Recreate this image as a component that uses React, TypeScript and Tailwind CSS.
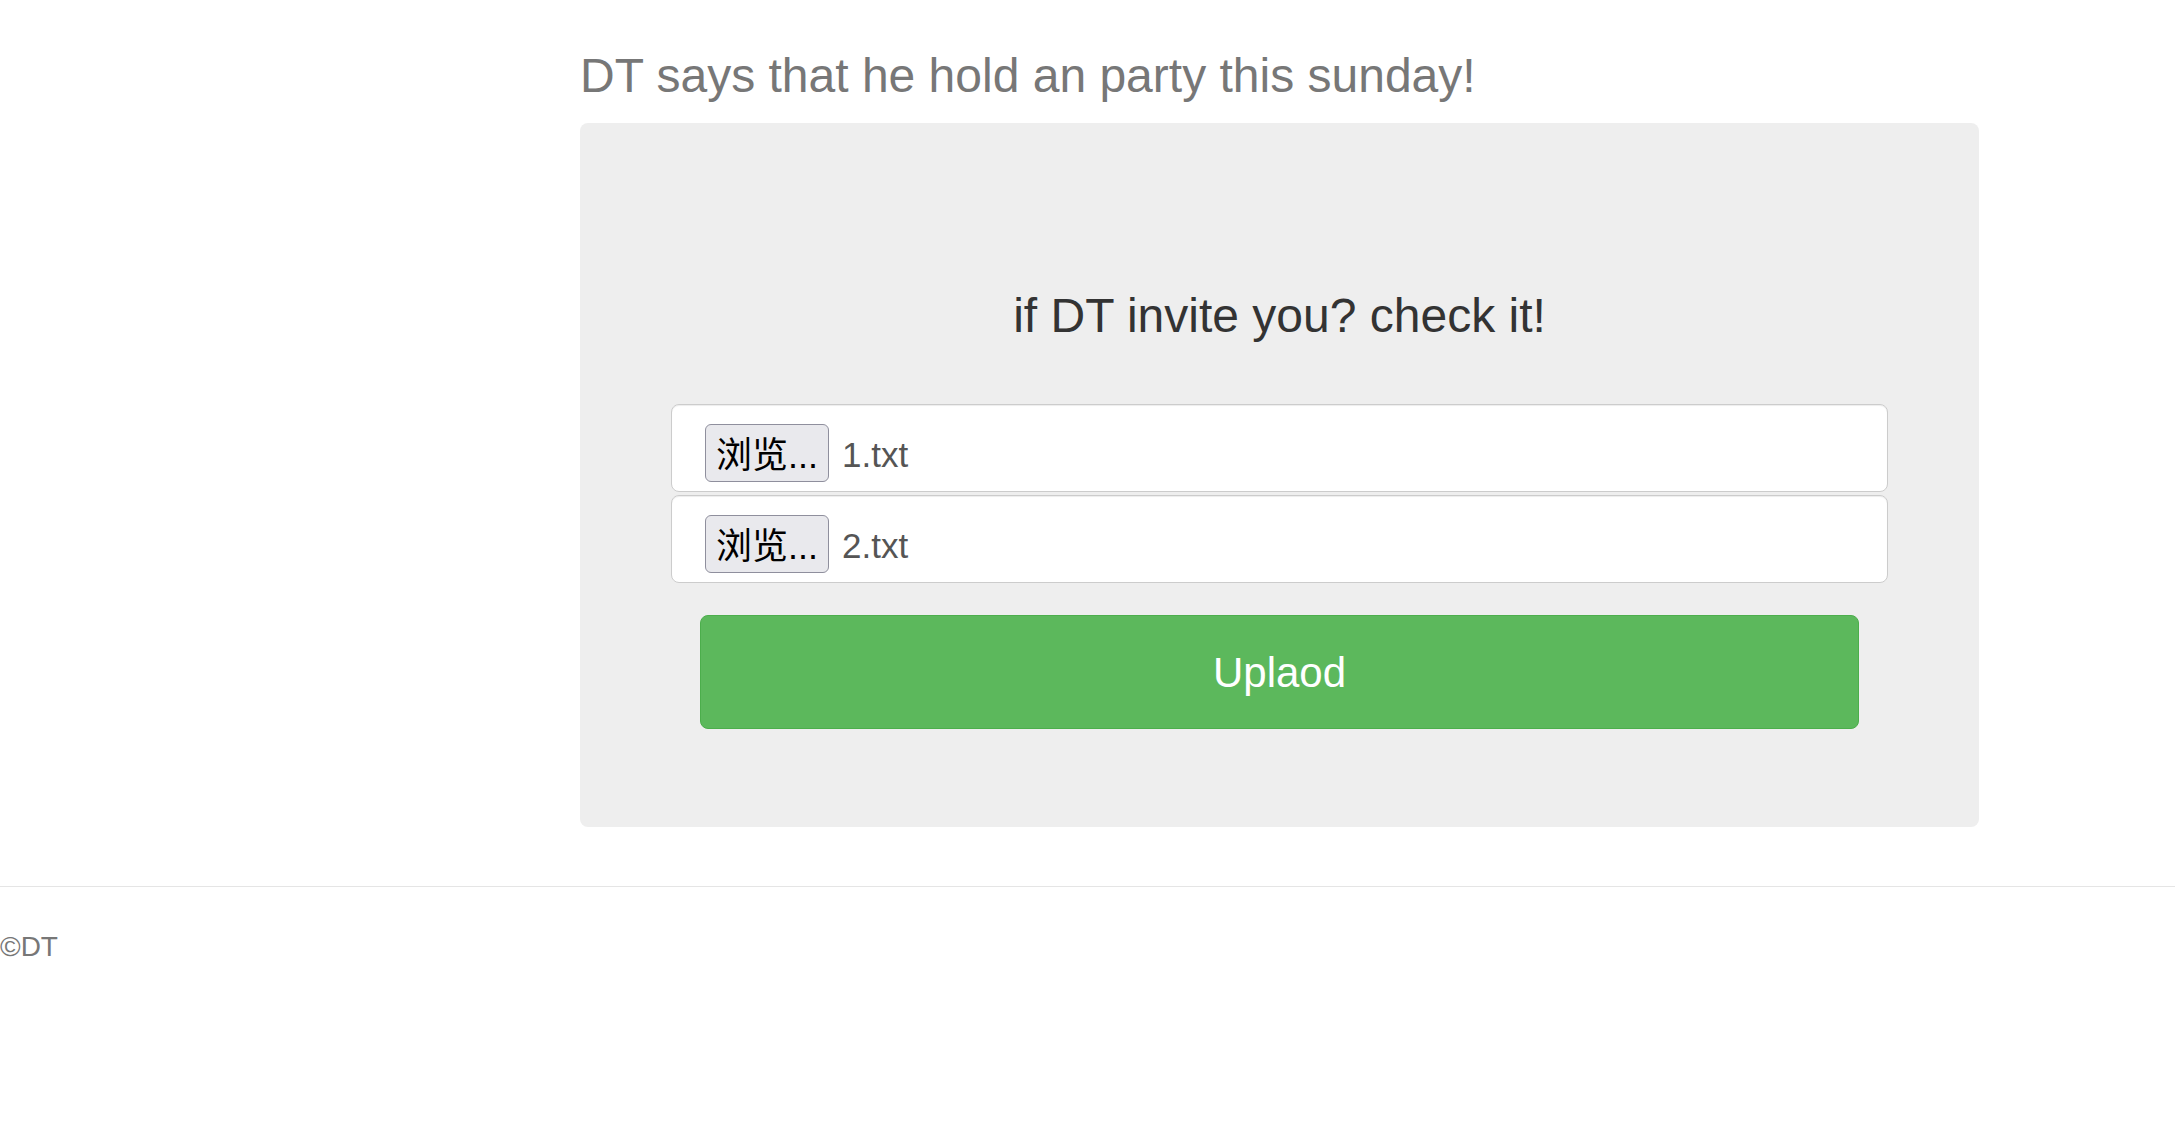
import React from "react";

function FileRow({ name }: { name: string }) {
    return (
        <div className="flex items-start h-[88px] bg-white border-[1.5px] border-[#ccc] rounded-[8px] shadow-[inset_0_1px_1px_rgba(0,0,0,0.075)] pl-[33px] pt-[19px]">
            <button className="h-[58px] w-[124px] flex items-center justify-center pt-[6px] bg-[#e9e9ed] border border-[#8f8f9d] rounded-[6px] text-black text-[36px] leading-none font-['Liberation_Sans','Noto_Sans_CJK_SC',sans-serif]">
                浏览...
            </button>
            <span className="ml-[13px] h-[62px] flex items-center text-[35px] text-[#555]">{name}</span>
        </div>
    );
}

export default function App() {
    return (
        <div className="min-h-screen bg-white font-['Liberation_Sans',Arial,sans-serif]">
            <div className="ml-[580px] w-[1399px] pt-[49px]">
                <h1 className="text-[48px] leading-[53px] text-[#777] mb-[21px]">
                    DT says that he hold an party this sunday!
                </h1>
                <div className="h-[704px] bg-[#eee] rounded-[8px] pt-[166px]">
                    <h2 className="text-[48px] leading-[53px] text-[#333] text-center">
                        if DT invite you? check it!
                    </h2>
                    <div className="mx-[91px] mt-[62px] flex flex-col gap-[3px]">
                        <FileRow name="1.txt" />
                        <FileRow name="2.txt" />
                    </div>
                    <div className="mx-[120px] mt-[32px]">
                        <button className="w-full h-[114px] bg-[#5cb85c] border border-[#4cae4c] rounded-[8px] text-white text-[42px]">
                            Uplaod
                        </button>
                    </div>
                </div>
            </div>
            <hr className="mt-[59px] border-0 border-t border-[#e5e5e5]" />
            <footer className="pt-[40px] text-[28px] leading-[40px] text-[#777]">©DT</footer>
        </div>
    );
}
